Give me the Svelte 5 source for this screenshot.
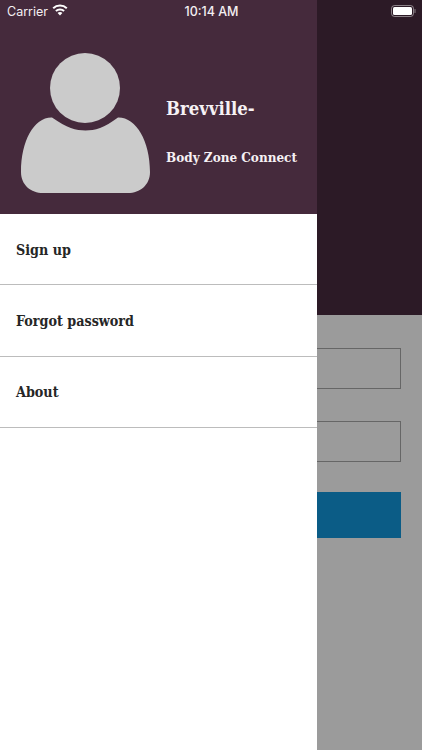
<script>
  const menuItems = ["Sign up", "Forgot password", "About"];
</script>

<main>
  <div class="status">
    <div class="status-left">
      <span>Carrier</span>
      <svg class="wifi" width="16" height="12" viewBox="0 0 16 12">
        <path d="M1.200 4.300C5 .7 11 .7 14.800 4.300" fill="none" stroke="#fff" stroke-width="2" />
        <path d="M3.900 7C6.200 4.900 9.800 4.900 12.100 7" fill="none" stroke="#fff" stroke-width="2" />
        <path d="M5.600 8.900C6.900 7.700 9.100 7.700 10.400 8.900L8 11.400z" fill="#fff" />
      </svg>
    </div>
    <span class="time">10:14 AM</span>
    <svg class="battery" width="25" height="12" viewBox="0 0 25 12">
      <rect x="0.5" y="0.5" width="22" height="11" rx="3" fill="none" stroke="#fff" stroke-opacity="0.45" />
      <rect x="2" y="2" width="19" height="8" rx="1.500" fill="#fff" />
      <rect x="23.500" y="4" width="1" height="4" rx="0.500" fill="#fff" fill-opacity="0.45" />
    </svg>
  </div>

  <aside class="drawer">
    <header class="profile">
      <svg class="avatar" width="129" height="140" viewBox="0 0 129 140">
        <circle cx="64" cy="35" r="35" fill="#cbcbcb" />
        <path d="M31 64.500C46 75 55 77.500 64.500 77.500C74 77.500 83 75 97 64.500C115 64 129 88 129 119C129 132 119 140 107 140H22C10 140 0 132 0 119C0 88 13 64 31 64.500Z" fill="#cbcbcb" />
      </svg>
      <div class="names">
        <div class="brand">Brevville-</div>
        <div class="sub">Body Zone Connect</div>
      </div>
    </header>
    <nav>
      {#each menuItems as item (item)}
        <div class="row">{item}</div>
      {/each}
    </nav>
  </aside>

  <section class="behind">
    <div class="hero"></div>
    <div class="form">
      <div class="field"></div>
      <div class="field"></div>
      <div class="submit"></div>
    </div>
  </section>
</main>

<style>
  :global(body) {
    margin: 0;
  }

  main {
    position: relative;
    display: flex;
    width: 422px;
    height: 750px;
    overflow: hidden;
    background: #9b9b9b;
  }

  .status {
    position: absolute;
    z-index: 2;
    top: 0;
    left: 0;
    right: 0;
    height: 22px;
    display: flex;
    align-items: center;
    justify-content: space-between;
    padding: 0 6px 0 7px;
    color: #f4eff2;
    font-family: Inter, sans-serif;
    font-size: 12.500px;
  }

  .status-left {
    display: flex;
    align-items: center;
    gap: 4px;
    width: 90px;
  }

  .wifi {
    margin-top: -2px;
  }

  .time {
    font-weight: 500;
  }

  .battery {
    margin-left: 65px;
  }

  .drawer {
    width: 317px;
    flex: none;
    background: #fff;
    z-index: 1;
  }

  .profile {
    height: 214px;
    box-sizing: border-box;
    background: #452a3c;
    display: flex;
    align-items: flex-start;
    padding: 53px 0 0 21px;
    color: #f6f1f4;
    font-family: "DejaVu Serif Condensed", "DejaVu Serif", serif;
    font-weight: bold;
  }

  .avatar {
    flex: none;
  }

  .names {
    margin-left: 16px;
  }

  .brand {
    font-size: 18.400px;
    margin-top: 45px;
    line-height: 22px;
  }

  .sub {
    font-size: 13.400px;
    margin-top: 28px;
    line-height: 18px;
    white-space: nowrap;
  }

  .row {
    height: 71.330px;
    box-sizing: border-box;
    display: flex;
    align-items: center;
    padding: 1px 0 0 16px;
    border-bottom: 1px solid #bcbcbc;
    color: #262626;
    font-family: "DejaVu Serif Condensed", "DejaVu Serif", serif;
    font-weight: bold;
    font-size: 14.200px;
  }

  .behind {
    flex: 1;
    min-width: 0;
  }

  .hero {
    height: 315px;
    background: #2c1a26;
  }

  .form {
    display: flex;
    flex-direction: column;
    padding: 33px 21px 0 0;
  }

  .field {
    height: 41px;
    box-sizing: border-box;
    border: 1px solid #666;
    border-left: none;
    margin-bottom: 32px;
  }

  .submit {
    height: 46px;
    margin-top: -2px;
    background: #0b5c86;
  }
</style>
